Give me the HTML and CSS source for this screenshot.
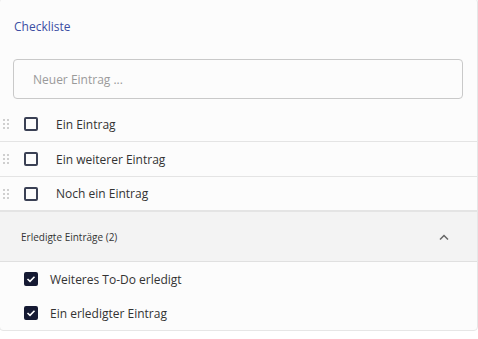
FILE: index.html
```html
<!DOCTYPE html>
<html lang="de">
<head>
<meta charset="utf-8">
<link rel="stylesheet" href="styles.css">
</head>
<body>
<div class="card">
  <div class="title">Checkliste</div>
  <div class="input-wrap"><input class="entry" type="text" placeholder="Neuer Eintrag ..."></div>
  <ul class="list">
    <li class="row"><span class="handle"></span><span class="box"></span><span class="label">Ein Eintrag</span></li>
    <li class="row"><span class="handle"></span><span class="box"></span><span class="label">Ein weiterer Eintrag</span></li>
    <li class="row"><span class="handle"></span><span class="box"></span><span class="label">Noch ein Eintrag</span></li>
  </ul>
  <div class="done-head">
    <span class="done-title">Erledigte Einträge (2)</span>
    <svg class="chev" width="10" height="6" viewBox="0 0 10 6"><path d="M1 5.5 L5 1.5 L9 5.5" fill="none" stroke="#666" stroke-width="1.5"/></svg>
  </div>
  <ul class="done-list">
    <li class="done-row"><span class="box checked"><svg width="10" height="8" viewBox="0 0 10 8"><path d="M1.5 4 L4 6.3 L8.5 1.7" fill="none" stroke="#fff" stroke-width="1.6"/></svg></span><span class="label">Weiteres To-Do erledigt</span></li>
    <li class="done-row"><span class="box checked"><svg width="10" height="8" viewBox="0 0 10 8"><path d="M1.5 4 L4 6.3 L8.5 1.7" fill="none" stroke="#fff" stroke-width="1.6"/></svg></span><span class="label">Ein erledigter Eintrag</span></li>
  </ul>
</div>
</body>
</html>
```
FILE: styles.css
```css
html, body {
  margin: 0;
  padding: 0;
  background: #ffffff;
}
body {
  font-family: "Open Sans", "Noto Sans", sans-serif;
  color: #333;
}
.card {
  box-sizing: border-box;
  width: 479px;
  margin: -2px 0 0 -1px;
  background: #fcfcfc;
  border: 1px solid #e6e6e6;
  border-radius: 4px;
  overflow: hidden;
}
.title {
  padding: 19px 0 0 14px;
  font-size: 12px;
  line-height: 18px;
  color: #3b4ea3;
}
.input-wrap {
  padding: 23px 14px 0 13px;
}
.entry {
  display: block;
  box-sizing: border-box;
  width: 450px;
  height: 40px;
  border: 1px solid #c9c9c9;
  border-radius: 4px;
  background: #fcfcfc;
  padding: 0 0 0 19px;
  font-family: inherit;
  font-size: 12px;
  color: #333;
  outline: none;
}
.entry::placeholder {
  color: #9a9a9a;
}
.list, .done-list {
  list-style: none;
  margin: 0;
  padding: 0;
}
.list {
  margin-top: 8px;
}
.row {
  display: flex;
  align-items: center;
  height: 35px;
  border-bottom: 1px solid #e4e4e4;
  box-sizing: border-box;
}
.row:last-child {
  border-bottom: none;
  height: 33px;
}
.handle {
  width: 6px;
  height: 10px;
  margin-left: 3px;
  background-image: radial-gradient(circle, #cfcfcf 1px, transparent 1.2px);
  background-size: 4px 4px;
  background-position: -1px -1px;
}
.box {
  box-sizing: border-box;
  width: 14px;
  height: 14px;
  border: 2px solid #3a4054;
  border-radius: 2px;
  margin-left: 15px;
  display: flex;
  align-items: center;
  justify-content: center;
}
.row .label {
  margin-left: 18px;
  font-size: 12px;
}
.done-head {
  display: flex;
  align-items: center;
  justify-content: space-between;
  height: 49px;
  background: #f3f3f3;
  border-top: 2px solid #e4e4e4;
  border-bottom: 1px solid #e0e0e0;
  padding: 0 28px 0 21px;
}
.done-title {
  font-size: 10px;
  color: #333;
}
.chev {
  display: block;
}
.done-row {
  display: flex;
  align-items: center;
  height: 34px;
}
.done-row .box {
  margin-left: 24px;
}
.box.checked {
  background: #151a33;
  border-color: #151a33;
}
.done-row .label {
  margin-left: 12px;
  font-size: 12px;
}
```
